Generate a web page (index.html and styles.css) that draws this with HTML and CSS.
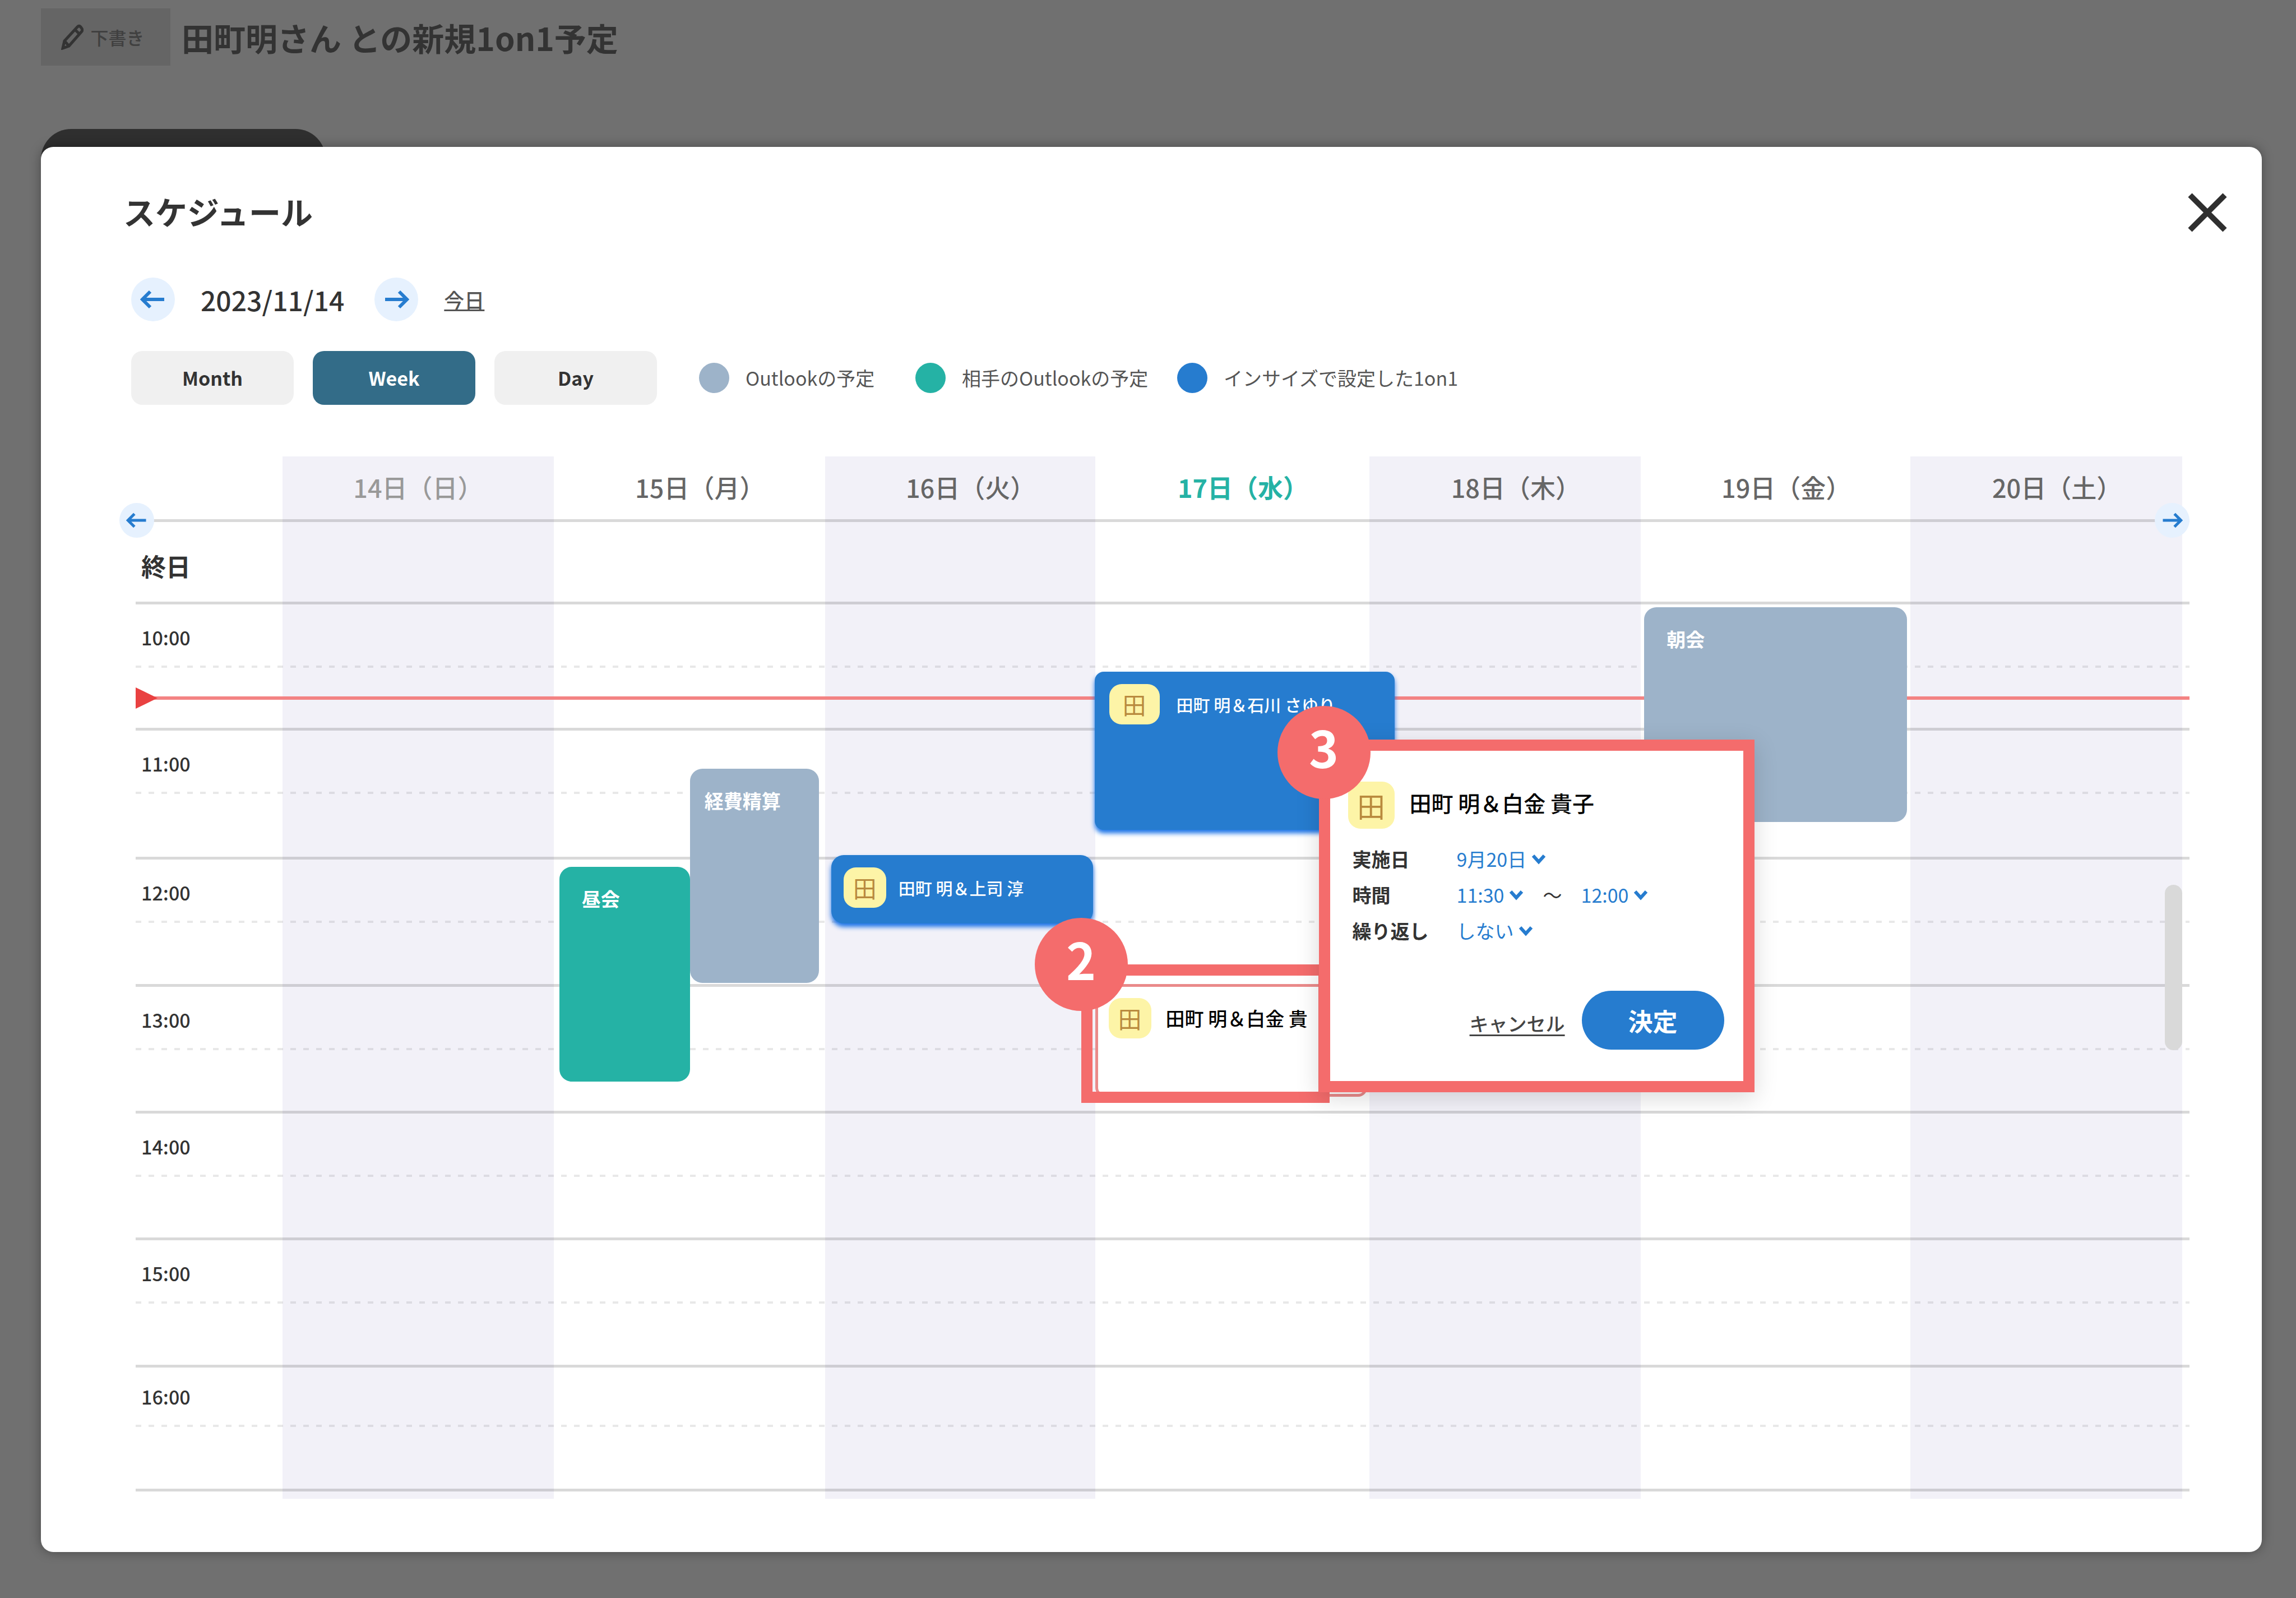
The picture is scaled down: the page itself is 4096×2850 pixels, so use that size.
FILE: index.html
```html
<!DOCTYPE html>
<html lang="ja">
<head>
    <meta charset="UTF-8">
    <meta name="viewport" content="width=device-width, initial-scale=1.0">
    <title>スケジュール</title>
    <link rel="stylesheet" href="styles.css">
</head>
<body>
    <header class="page-header">
        <span class="draft">
            <svg class="pencil" viewBox="0 0 40 46"><path d="M3 43 L6 30 L29 5 Q32 2 35 5 L37 8 Q39 11 36 14 L14 39 Z M25 10 L33 18 M6 30 L14 39"/></svg>
            下書き
        </span>
        <h1>田町明さん との新規1on1予定</h1>
    </header>
    <div class="tab"></div>

    <main class="modal">
        <div class="modal-head">
            <h2>スケジュール</h2>
            <button class="close" aria-label="閉じる">
                <svg viewBox="0 0 72 72"><path d="M5 5 L67 67 M67 5 L5 67"/></svg>
            </button>
        </div>

        <div class="date-nav">
            <button class="arrow" aria-label="前の週"><svg viewBox="0 0 46 36"><path d="M43 18 H4 M18 4 L4 18 L18 32"/></svg></button>
            <span class="date">2023/11/14</span>
            <button class="arrow" aria-label="次の週"><svg viewBox="0 0 46 36"><path d="M3 18 H42 M28 4 L42 18 L28 32"/></svg></button>
            <a class="today-link" href="#">今日</a>
        </div>

        <div class="toolbar">
            <div class="views">
                <button>Month</button>
                <button class="active">Week</button>
                <button>Day</button>
            </div>
            <ul class="legend">
                <li><span class="dot gray"></span>Outlookの予定</li>
                <li><span class="dot green"></span>相手のOutlookの予定</li>
                <li><span class="dot blue"></span>インサイズで設定した1on1</li>
            </ul>
        </div>

        <div class="calendar">
            <!-- Days -->
            <section class="day shade sunday"><h3>14日（日）</h3></section>
            <section class="day">
                <h3>15日（月）</h3>
                <div class="event green lunch">昼会</div>
                <div class="event gray expense">経費精算</div>
            </section>
            <section class="day shade">
                <h3>16日（火）</h3>
                <div class="event blue boss"><span class="avatar">田</span>田町 明＆上司 淳</div>
            </section>
            <section class="day today">
                <h3>17日（水）</h3>
                <div class="event blue ishikawa"><span class="avatar wide">田</span>田町 明＆石川 さゆり</div>
                <div class="event new"><span class="avatar">田</span>田町 明＆白金 貴</div>
                <div class="callout step2"><span class="step">2</span></div>
                <form class="callout step3">
                    <span class="step">3</span>
                    <div class="popup-title"><span class="avatar large">田</span>田町 明＆白金 貴子</div>
                    <div class="field">
                        <label for="date">実施日</label>
                        <select id="date"><option>9月20日</option></select>
                        <svg class="chevron" viewBox="0 0 28 20"><path d="M4 4 L14 15 L24 4"/></svg>
                    </div>
                    <div class="field">
                        <label for="start">時間</label>
                        <select id="start"><option>11:30</option></select>
                        <svg class="chevron" viewBox="0 0 28 20"><path d="M4 4 L14 15 L24 4"/></svg>
                        <span class="tilde">～</span>
                        <select id="end" aria-label="終了時間"><option>12:00</option></select>
                        <svg class="chevron" viewBox="0 0 28 20"><path d="M4 4 L14 15 L24 4"/></svg>
                    </div>
                    <div class="field">
                        <label for="repeat">繰り返し</label>
                        <select id="repeat"><option>しない</option></select>
                        <svg class="chevron" viewBox="0 0 28 20"><path d="M4 4 L14 15 L24 4"/></svg>
                    </div>
                    <div class="actions">
                        <a href="#">キャンセル</a>
                        <button type="button">決定</button>
                    </div>
                </form>
            </section>
            <section class="day shade"><h3>18日（木）</h3></section>
            <section class="day">
                <h3>19日（金）</h3>
                <div class="event gray morning">朝会</div>
            </section>
            <section class="day shade"><h3>20日（土）</h3></section>

            <!-- Hours -->
            <div class="row all-day"><span class="time">終日</span></div>
            <div class="row hour"><span class="time">10:00</span></div>
            <div class="row hour"><span class="time">11:00</span></div>
            <div class="row hour"><span class="time">12:00</span></div>
            <div class="row hour"><span class="time">13:00</span></div>
            <div class="row hour"><span class="time">14:00</span></div>
            <div class="row hour"><span class="time">15:00</span></div>
            <div class="row hour last"><span class="time">16:00</span></div>
            <div class="row"></div>

            <div class="now"></div>
            <div class="scrollbar"></div>
            <button class="arrow small prev" aria-label="前へ"><svg viewBox="0 0 46 36"><path d="M43 18 H4 M18 4 L4 18 L18 32"/></svg></button>
            <button class="arrow small next" aria-label="次へ"><svg viewBox="0 0 46 36"><path d="M3 18 H42 M28 4 L42 18 L28 32"/></svg></button>
        </div>
    </main>
</body>
</html>
```

FILE: styles.css
```css
* { box-sizing: border-box; }
body { margin: 0; padding: 15px 61px 82px 73px; background: #707070; color: #333; font-family: "Noto Sans CJK JP", sans-serif; font-size: 34px; line-height: 50px; }
h1, h2, h3 { margin: 0; font-weight: 500; }
button, select { font: inherit; color: inherit; border: none; padding: 0; cursor: pointer; }
svg { display: block; fill: none; stroke: currentColor; }

.page-header { display: flex; align-items: center; gap: 20px; }
.page-header h1 { font-size: 57px; line-height: 80px; font-weight: 700; }
.draft { display: flex; align-items: center; justify-content: center; gap: 12px; width: 231px; height: 102px; padding-right: 10px; background: #656565; color: #404040; font-size: 32px; font-weight: 500; }
.pencil { width: 40px; height: 46px; stroke: #333; stroke-width: 5; }
.tab { width: 508px; height: 62px; margin: 113px 0 -30px; background: #2f2f2f; border-radius: 54px 54px 0 0; }

.modal { position: relative; padding: 77px 129px 95px 161px; background: #fff; border-radius: 22px; box-shadow: 0 0 20px rgba(0,0,0,0.35); }
.modal-head { display: flex; justify-content: space-between; align-items: center; margin: 0 -68px 0 -14px; height: 80px; }
.modal-head h2 { font-size: 57px; line-height: 74px; padding-bottom: 6px; font-weight: 700; }
.close { width: 72px; height: 72px; background: none; color: #2f2f2f; }
.close svg { stroke-width: 10; }

.date-nav { display: flex; align-items: center; margin-top: 76px; }
.arrow { display: flex; align-items: center; justify-content: center; width: 78px; height: 78px; border-radius: 50%; background: #e6f1fe; color: #267ccf; }
.arrow svg { width: 46px; height: 36px; stroke-width: 6; }
.date { margin: 0 54px 0 46px; font-size: 48px; font-weight: 500; }
.today-link { margin-left: 46px; font-size: 36px; font-weight: 500; color: #555; }

.toolbar { display: flex; align-items: center; gap: 75px; margin-top: 53px; }
.views { display: flex; gap: 34px; }
.views button { width: 290px; height: 96px; border-radius: 20px; background: #f0f0f0; font-weight: 700; }
.views .active { background: #336c88; color: #fff; }
.legend { display: grid; grid-template-columns: 386px 467px auto; margin: 0; padding: 0; list-style: none; color: #555; }
.legend li { display: flex; align-items: center; gap: 29px; }
.dot { width: 54px; height: 54px; border-radius: 50%; }
.gray { background: #9db3c9; }
.green { background: #25b2a5; }
.blue { background: #267ccf; }

.calendar { position: relative; display: grid; grid-template-columns: 262px 484fr 484fr 482fr 490fr 484fr 481fr 485fr 13px; grid-template-rows: 112px 147px 225px 230px 227px 226px 226px 227px 221px 18px; margin: 92px 0 0 8px; }
.day { position: relative; grid-row: 1 / -1; }
.day:nth-of-type(1) { grid-column: 2; }
.day:nth-of-type(2) { grid-column: 3; }
.day:nth-of-type(3) { grid-column: 4; }
.day:nth-of-type(4) { grid-column: 5; }
.day:nth-of-type(5) { grid-column: 6; }
.day:nth-of-type(6) { grid-column: 7; }
.day:nth-of-type(7) { grid-column: 8; }
.shade { background: #f2f1f8; }
.day h3 { padding: 25px 0 0 38px; font-size: 45px; line-height: 60px; text-align: center; color: #666; }
.day.sunday h3 { padding-left: 0; color: #999; }
.today h3 { color: #25b2a5; font-weight: 700; }

.row { position: relative; grid-column: 1 / -1; border-top: 5px solid rgba(0,0,0,0.15); }
.row:nth-of-type(1) { grid-row: 2; }
.row:nth-of-type(2) { grid-row: 3; }
.row:nth-of-type(3) { grid-row: 4; }
.row:nth-of-type(4) { grid-row: 5; }
.row:nth-of-type(5) { grid-row: 6; }
.row:nth-of-type(6) { grid-row: 7; }
.row:nth-of-type(7) { grid-row: 8; }
.row:nth-of-type(8) { grid-row: 9; }
.row:nth-of-type(9) { grid-row: 10; }
.time { display: block; height: 109px; padding: 34px 0 0 10px; font-weight: 500; }
.last .time { height: 102px; padding-top: 27px; }
.hour::after { content: ""; display: block; height: 4px; background: repeating-linear-gradient(90deg, rgba(0,0,0,0.09) 0 10px, transparent 10px 23px); }
.all-day .time { padding-top: 53px; font-size: 44px; font-weight: 700; }

.now { position: absolute; top: 428px; left: 0; right: 0; height: 6px; background: #f38383; }
.now::before { content: ""; position: absolute; top: -16px; left: 0; border-left: 39px solid #e94141; border-top: 19px solid transparent; border-bottom: 19px solid transparent; }
.scrollbar { position: absolute; top: 764px; right: 13px; width: 31px; height: 295px; border-radius: 16px; background: #d9d9d9; }
.small { position: absolute; top: 83px; width: 62px; height: 62px; }
.small svg { width: 38px; height: 30px; }
.prev { left: -29px; }
.next { right: 0; }

/* Events */
.event { position: absolute; z-index: 1; padding: 32px 40px; border-radius: 22px; color: #fff; font-weight: 700; white-space: nowrap; }
.lunch { top: 732px; left: 10px; width: 233px; height: 383px; }
.expense { top: 557px; left: 243px; right: 11px; height: 382px; padding-left: 26px; }
.morning { top: 269px; left: 6px; right: 6px; height: 383px; }
.event.blue, .new { display: flex; align-items: flex-start; gap: 22px; padding: 22px; font-size: 30px; font-weight: 500; line-height: 72px; }
.event.blue { box-shadow: 0 6px 8px #1a73e8; }
.boss { top: 711px; left: 11px; right: 4px; height: 122px; }
.ishikawa { top: 384px; left: -1px; width: 535px; height: 282px; border-radius: 16px; }
.event.ishikawa { gap: 30px; padding-left: 26px; }
.event.new { top: 941px; left: 0; right: 4px; height: 201px; gap: 26px; border: 5px solid #ea8a8a; border-radius: 16px; background: #fff; color: #000; font-size: 34px; padding: 20px 19px; }
.avatar { flex: none; width: 76px; height: 72px; border-radius: 22px; background: #fdf4a7; color: #b98a3e; font-size: 42px; font-weight: 400; line-height: 72px; text-align: center; }
.avatar.wide { width: 90px; }
.avatar.large { width: 83px; height: 84px; font-size: 50px; line-height: 84px; }

/* Callouts */
.callout { position: absolute; z-index: 2; border: 20px solid #f46c6c; }
.step { position: absolute; width: 166px; height: 166px; border-radius: 50%; background: #f46c6c; color: #fff; font-size: 90px; font-weight: 700; line-height: 144px; text-align: center; }
.step2 { top: 906px; left: -25px; width: 443px; height: 247px; }
.step2 .step { top: -103px; left: -103px; }
.step3 { top: 505px; left: 399px; width: 777px; height: 629px; padding: 55px 34px 0 32px; background: #fff; box-shadow: 0 10px 40px rgba(0,0,0,0.15); }
.step3 .step { top: -80px; left: -94px; }
.popup-title { display: flex; align-items: flex-start; gap: 27px; margin-bottom: 22px; color: #000; font-size: 39px; font-weight: 500; line-height: 74px; }
.field { display: flex; align-items: center; height: 64px; padding-left: 8px; }
.field label { width: 186px; font-weight: 700; }
.field select { appearance: none; background: none; color: #267ccf; }
.chevron { width: 28px; height: 20px; margin-left: 7px; color: #267ccf; stroke-width: 6; }
.tilde { width: 102px; text-align: center; }
.actions { display: flex; align-items: center; justify-content: flex-end; gap: 30px; margin-top: 75px; }
.actions a { padding-top: 10px; color: #444; font-weight: 500; text-underline-offset: 6px; }
.actions button { width: 254px; height: 105px; border-radius: 53px; background: #267ccf; color: #fff; font-size: 44px; font-weight: 700; }
```
